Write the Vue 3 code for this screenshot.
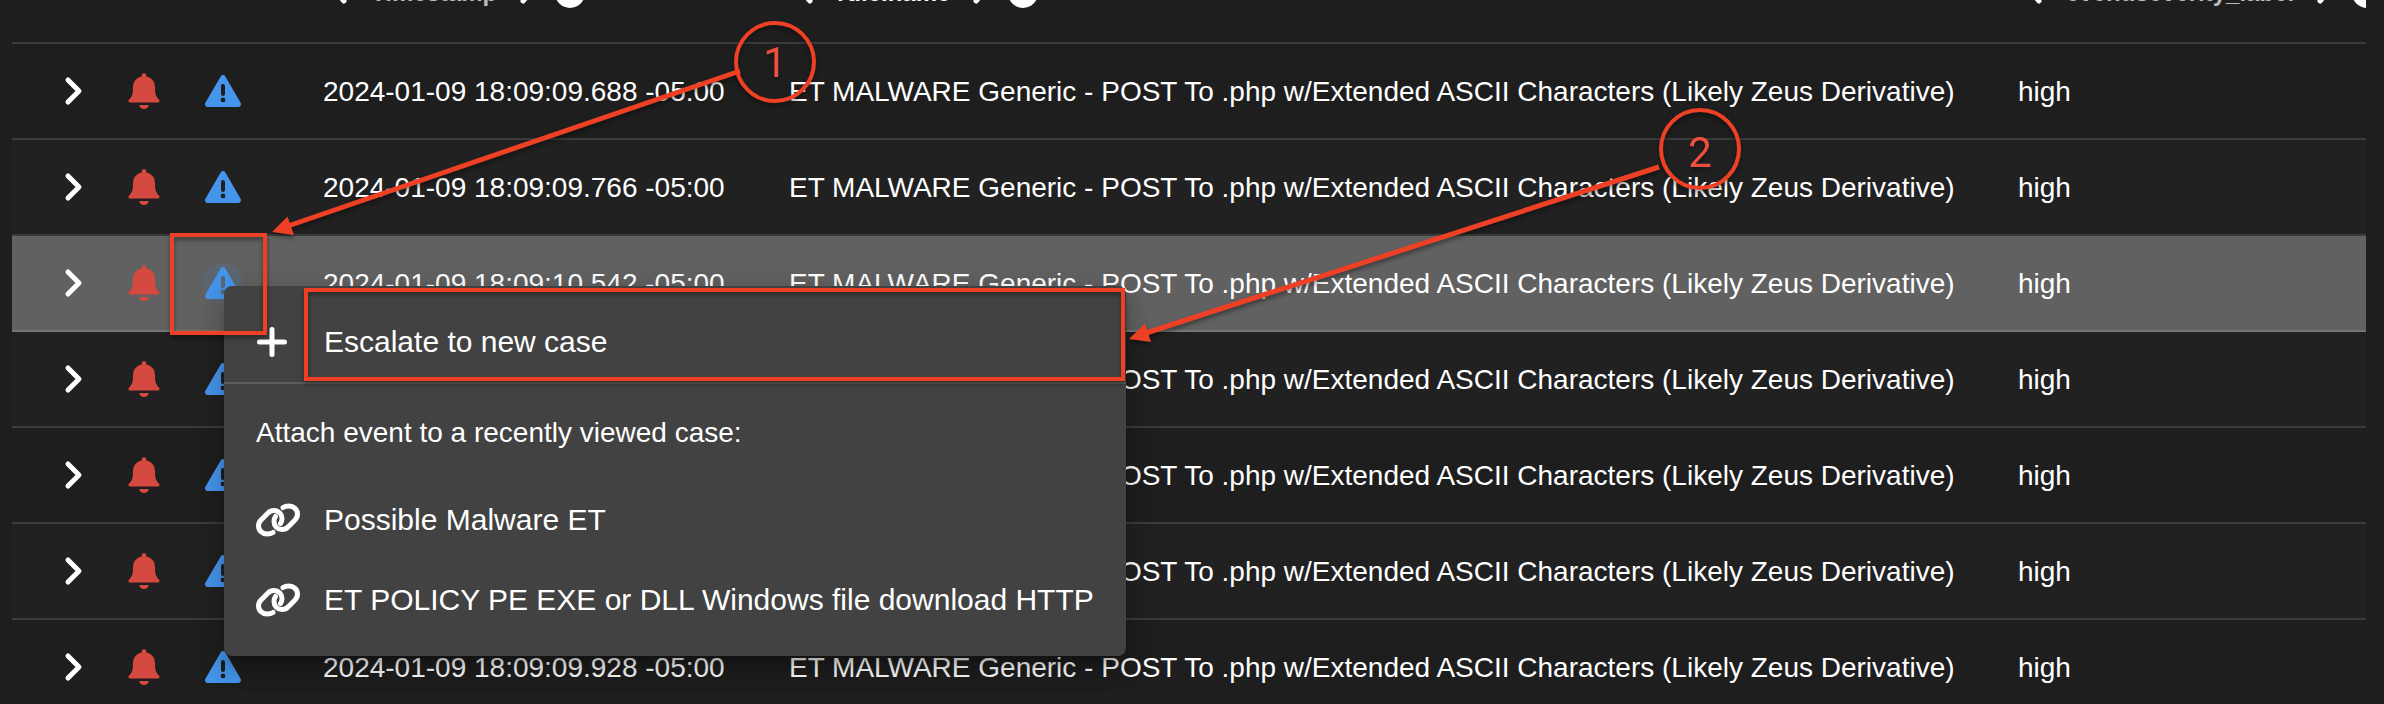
<script setup>
const columns = [
  { key: 'time', label: 'Timestamp', sorted: false },
  { key: 'rule', label: 'rule.name', sorted: true },
  { key: 'severity', label: 'event.severity_label', sorted: false }
]
const rule = 'ET MALWARE Generic - POST To .php w/Extended ASCII Characters (Likely Zeus Derivative)'
const rows = [
  '2024-01-09 18:09:09.688 -05:00',
  '2024-01-09 18:09:09.766 -05:00',
  '2024-01-09 18:09:10.542 -05:00',
  '2024-01-09 18:09:10.604 -05:00',
  '2024-01-09 18:09:10.745 -05:00',
  '2024-01-09 18:09:09.850 -05:00',
  '2024-01-09 18:09:09.928 -05:00'
].map((time, i) => ({ time, rule, severity: 'high', active: i === 2 }))
const cases = ['Possible Malware ET', 'ET POLICY PE EXE or DLL Windows file download HTTP']
</script>

<template>
  <main class="page">
    <table class="events">
      <colgroup>
        <col class="c-expand"><col class="c-bell"><col class="c-warn"><col class="c-time"><col class="c-rule"><col class="c-sev">
      </colgroup>
      <thead>
        <tr>
          <th></th><th></th><th></th>
          <th v-for="c in columns" :key="c.key" scope="col">
            <div class="head" :class="{ sorted: c.sorted }">
              <button class="ghost" type="button" aria-label="Move left">
                <svg width="20" height="28" viewBox="0 0 20 28"><path d="M15 2 6 12l9 10" /></svg>
              </button>
              <span>{{ c.label }}</span>
              <button class="ghost" type="button" aria-label="Move right">
                <svg width="20" height="28" viewBox="0 0 20 28"><path d="m4 2 9 10-9 10" /></svg>
              </button>
              <button class="ghost dot" type="button" aria-label="Remove column"></button>
            </div>
          </th>
        </tr>
      </thead>
      <tbody>
        <tr v-for="r in rows" :key="r.time" :class="{ active: r.active }">
          <td class="icon">
            <button class="ghost" type="button" aria-label="Expand">
              <svg width="20" height="32" viewBox="0 0 20 32"><path class="chevron" d="m4 5 11 11L4 27" /></svg>
            </button>
          </td>
          <td class="icon">
            <button class="ghost" type="button" aria-label="Acknowledge">
              <svg width="32" height="36" viewBox="0 0 32 36">
                <path class="bell" d="M16 0c1.400 0 2.300 1 2.300 2.300v1.200C24 4.600 27 9 27 14c0 7 .8 9.600 4 12.600 1 1 .8 2.900-1 2.900H2c-1.800 0-2-1.900-1-2.900C4.200 23.600 5 21 5 14 5 9 8 4.600 13.700 3.500V2.300C13.700 1 14.600 0 16 0ZM11.500 32h9c0 2.500-2 4-4.500 4s-4.500-1.500-4.500-4Z" />
              </svg>
            </button>
          </td>
          <td class="icon">
            <button class="ghost warn" type="button" aria-label="Escalate">
              <svg width="36" height="32" viewBox="0 0 36 32">
                <path class="tri" fill-rule="evenodd" d="M15.800 1.300a2.600 2.600 0 0 1 4.400 0L35.600 27.800c1 1.800-.2 4.200-2.300 4.200H2.700C.6 32-.6 29.600.4 27.800ZM18 9a2 2 0 0 0-2 2v8a2 2 0 0 0 4 0v-8a2 2 0 0 0-2-2Zm0 13.500a2.400 2.400 0 1 0 0 4.800 2.400 2.400 0 0 0 0-4.800Z" />
              </svg>
            </button>
          </td>
          <td>{{ r.time }}</td>
          <td>{{ r.rule }}</td>
          <td>{{ r.severity }}</td>
        </tr>
      </tbody>
    </table>

    <div class="menu" role="menu">
      <button class="item new" type="button" role="menuitem">
        <svg width="44" height="32" viewBox="0 0 44 32"><path d="M16 3.500v25M3.500 16h25" /></svg>
        <span>Escalate to new case</span>
      </button>
      <p class="caption">Attach event to a recently viewed case:</p>
      <button v-for="c in cases" :key="c" class="item" type="button" role="menuitem">
        <svg width="44" height="34" viewBox="0 0 44 34">
          <path d="M17 29.500c-1.500 1-3.700 1.500-6 1.500-4.700 0-8.500-3.500-8.500-8 0-2.500 1-4.500 2.500-6l7-7c1.600-1.700 3.700-2.500 6-2.500 4.500 0 8 3.500 8 8 0 1.700-.4 3.500-1.500 5" />
          <path transform="rotate(180 22 17)" d="M17 29.500c-1.500 1-3.700 1.500-6 1.500-4.700 0-8.500-3.500-8.500-8 0-2.500 1-4.500 2.500-6l7-7c1.600-1.700 3.700-2.500 6-2.500 4.500 0 8 3.500 8 8 0 1.700-.4 3.500-1.500 5" />
        </svg>
        <span>{{ c }}</span>
      </button>
    </div>

    <svg class="notes" width="2384" height="704" viewBox="0 0 2384 704" aria-hidden="true">
      <g class="stroke">
        <rect x="172" y="235" width="93" height="98" />
        <rect x="306" y="290" width="817" height="89" />
        <circle cx="775" cy="62" r="39" />
        <circle cx="1700" cy="149" r="39" />
        <path d="M740 71 288 226M1659 167 1146 333" />
      </g>
      <path class="tip" d="m272 232 15.500-15.500 6.500 18.500ZM1129 339l16-15.500 6 18.500Z" />
      <text x="775" y="77">1</text>
      <text x="1700" y="167">2</text>
    </svg>
  </main>
</template>

<style>
body { background: #1e1e1e; }
</style>

<style scoped>
.page {
  position: relative;
  box-sizing: border-box;
  height: 100vh;
  overflow: hidden;
  padding: 0 18px 0 12px;
  background: #1e1e1e;
  color: #fff;
  font-family: "Liberation Sans", Arial, sans-serif;
  font-size: 28px;
}
.events {
  width: 100%;
  margin-top: -52px;
  table-layout: fixed;
  border-collapse: separate;
  border-spacing: 0;
}
.c-expand { width: 88px; }
.c-bell { width: 88px; }
.c-warn { width: 103px; }
.c-time { width: 466px; }
.c-rule { width: 1229px; }
th, td {
  box-sizing: border-box;
  height: 96px;
  padding: 2px 0 0 32px;
  border-bottom: 2px solid #3b3b3b;
  text-align: left;
  white-space: nowrap;
  overflow: hidden;
}
th { padding: 0 0 4px 32px; }
tbody tr:nth-child(even) td { background: #212121; }
tbody tr.active td { background: #616161; border-bottom-color: #767676; }
.ghost, .item {
  margin: 0;
  padding: 0;
  border: 0;
  background: none;
  color: inherit;
  font: inherit;
}
.ghost { display: block; }
svg { display: block; }
td.icon { padding: 0; }
.icon:first-child .ghost { margin-left: 52px; }
.icon:nth-child(2) .ghost { margin-left: 28px; }
.icon:nth-child(3) .ghost { margin-left: 15px; }
.head { display: flex; align-items: center; font-size: 24px; color: #bcbcbc; }
.head.sorted { color: #fff; }
.head span { margin: 0 22px; }
.head path { fill: none; stroke: #fff; stroke-width: 5; stroke-linecap: round; stroke-linejoin: round; }
.head .ghost:first-child { margin-left: 6px; }
.head .dot { flex: none; width: 30px; height: 30px; margin-left: 16px; border-radius: 50%; background: #fff; }
.chevron { fill: none; stroke: #fff; stroke-width: 5; stroke-linecap: round; stroke-linejoin: round; }
.bell { fill: #d5493f; }
.tri { fill: #4595ec; }
.warn { display: grid; place-items: center; width: 40px; height: 40px; border-radius: 50%; }
.active .warn { background: #5b6670; }

.menu {
  position: absolute;
  left: 224px;
  top: 286px;
  box-sizing: border-box;
  padding-bottom: 16px;
  border-radius: 8px;
  background: #424242;
  box-shadow: 0 10px 10px -6px rgba(0,0,0,.2), 0 16px 20px 2px rgba(0,0,0,.14), 0 6px 28px 4px rgba(0,0,0,.12);
}
.item {
  display: flex;
  align-items: center;
  gap: 24px;
  width: 100%;
  height: 80px;
  padding: 0 32px;
  font-size: 30px;
  white-space: nowrap;
}
.item.new { height: 98px; padding-top: 16px; border-bottom: 2px solid #5c5c5c; }
.item path { fill: none; stroke: #fff; stroke-width: 5; stroke-linecap: round; stroke-linejoin: round; }
.caption { margin: 0; height: 96px; padding-left: 32px; line-height: 98px; }
.notes { position: absolute; left: 0; top: 0; filter: drop-shadow(0 3px 2px rgba(0,0,0,.4)); pointer-events: none; }
.stroke { fill: none; stroke: #ed4024; stroke-width: 4; }
.stroke path { stroke-width: 5; }
.tip { fill: #ed4024; }
.notes text { fill: #f04e3e; font-family: Roboto, sans-serif; font-size: 42px; text-anchor: middle; }
</style>
